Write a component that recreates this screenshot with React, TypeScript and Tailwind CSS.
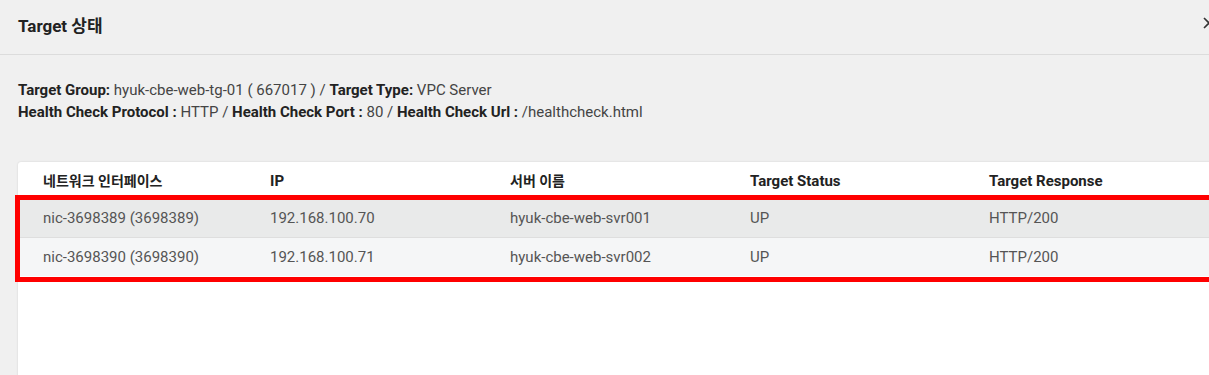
import React from "react";

const rows = [
  { nic: "nic-3698389 (3698389)", ip: "192.168.100.70", name: "hyuk-cbe-web-svr001", status: "UP", resp: "HTTP/200" },
  { nic: "nic-3698390 (3698390)", ip: "192.168.100.71", name: "hyuk-cbe-web-svr002", status: "UP", resp: "HTTP/200" },
];

const cols = ["w-[227px]", "w-[240px]", "w-[240px]", "w-[239px]", "w-[260px]"];

const headers = [
  { label: "네트워크 인터페이스", ko: true },
  { label: "IP", ko: false },
  { label: "서버 이름", ko: true },
  { label: "Target Status", ko: false },
  { label: "Target Response", ko: false },
];

export default function App() {
  return (
    <div
      className="w-[1209px] h-[375px] overflow-hidden bg-[#f0f0f0] text-[#222]"
      style={{ fontFamily: 'Roboto, "Noto Sans CJK KR", sans-serif' }}
    >
      {/* 헤더 */}
      <div className="relative h-[55px] border-b border-[#dcdcdc] flex items-center pl-[18px]">
        <h1 className="text-[17px] font-bold leading-none pb-[1px]">Target 상태</h1>
        <svg
          className="absolute left-[1203px] top-[17px]"
          width="12"
          height="12"
          viewBox="0 0 12 12"
          fill="none"
          stroke="#333"
          strokeWidth="1.6"
        >
          <path d="M1 1l10 10M11 1L1 11" />
        </svg>
      </div>

      {/* 정보 */}
      <div className="pl-[18px] pt-[24px] text-[15px] leading-[22px] text-[#444]">
        <p>
          <b className="font-bold text-[#222]">Target Group:</b> hyuk-cbe-web-tg-01 ( 667017 ) /{" "}
          <b className="font-bold text-[#222]">Target Type:</b> VPC Server
        </p>
        <p>
          <b className="font-bold text-[#222]">Health Check Protocol :</b> HTTP /{" "}
          <b className="font-bold text-[#222]">Health Check Port :</b> 80 /{" "}
          <b className="font-bold text-[#222]">Health Check Url :</b> /healthcheck.html
        </p>
      </div>

      {/* 테이블 */}
      <div className="relative ml-[18px] mt-[39px] w-[1230px] h-[300px] bg-white rounded-tl-[3px] shadow-[0_0_2px_rgba(0,0,0,0.15)] text-[15px]">
        <div className="flex h-[38px] items-center font-bold text-[#222]">
          {headers.map((h, i) => (
            <div key={h.label} className={`${cols[i]} pl-[25px]`}>
              <span className={h.ko ? "text-[14px]" : ""}>{h.label}</span>
            </div>
          ))}
        </div>
        {rows.map((r, idx) => (
          <div
            key={r.nic}
            className={
              idx === 0
                ? "flex h-[38px] items-center text-[#555] bg-[#e9eaea] border-b border-[#dedede]"
                : "flex h-[38px] items-center text-[#555] bg-[#f5f6f7]"
            }
          >
            {[r.nic, r.ip, r.name, r.status, r.resp].map((v, i) => (
              <div key={i} className={`${cols[i]} pl-[25px]`}>
                {v}
              </div>
            ))}
          </div>
        ))}

        {/* 강조 박스 */}
        <div className="absolute left-[-3px] top-[33px] w-[1240px] h-[87px] border-[5px] border-[#ff0000]" />
      </div>
    </div>
  );
}
